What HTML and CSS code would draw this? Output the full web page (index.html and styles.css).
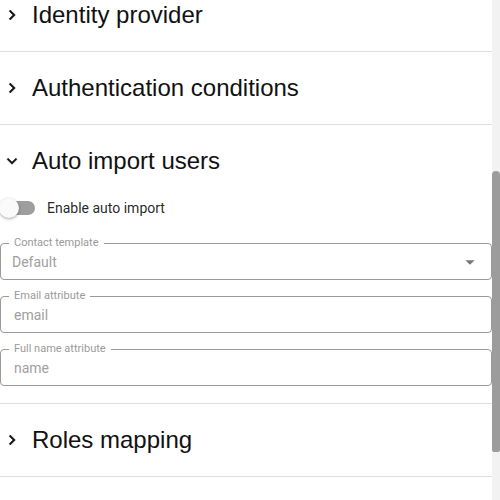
FILE: index.html
```html
<!DOCTYPE html>
<html>
<head>
<meta charset="utf-8">
<link rel="stylesheet" href="styles.css">
</head>
<body>
<div class="viewport">
  <div class="content">
    <div class="section">
      <div class="header">
        <svg class="chev" viewBox="0 0 24 24"><path d="M8.59 16.59 13.17 12 8.59 7.41 10 6l6 6-6 6z"/></svg>
        <span class="title">Identity provider</span>
      </div>
    </div>
    <div class="section">
      <div class="header">
        <svg class="chev" viewBox="0 0 24 24"><path d="M8.59 16.59 13.17 12 8.59 7.41 10 6l6 6-6 6z"/></svg>
        <span class="title">Authentication conditions</span>
      </div>
    </div>
    <div class="section">
      <div class="header">
        <svg class="chev" viewBox="0 0 24 24"><path d="M7.41 8.59 12 13.17l4.59-4.58L18 10l-6 6-6-6z"/></svg>
        <span class="title">Auto import users</span>
      </div>
      <div class="body">
        <div class="switch-row">
          <span class="switch"><span class="track"></span><span class="thumb"></span></span>
          <span class="switch-label">Enable auto import</span>
        </div>
        <div class="field">
          <span class="label">Contact template</span>
          <div class="value select">Default<svg class="caret" viewBox="0 0 24 24"><path d="M7 10l5 5 5-5z"/></svg></div>
        </div>
        <div class="field">
          <span class="label">Email attribute</span>
          <div class="value input">email</div>
        </div>
        <div class="field">
          <span class="label">Full name attribute</span>
          <div class="value input">name</div>
        </div>
      </div>
    </div>
    <div class="section">
      <div class="header">
        <svg class="chev" viewBox="0 0 24 24"><path d="M8.59 16.59 13.17 12 8.59 7.41 10 6l6 6-6 6z"/></svg>
        <span class="title">Roles mapping</span>
      </div>
    </div>
    <div class="section">
      <div class="header"></div>
    </div>
  </div>
  <div class="scrollbar"><div class="sb-thumb"></div></div>
</div>
</body>
</html>
```

FILE: styles.css
```css
html, body {
  margin: 0;
  padding: 0;
  background: #fff;
}
body {
  font-family: Roboto, "Liberation Sans", sans-serif;
  color: rgba(0,0,0,0.87);
  overflow: hidden;
}
.viewport {
  display: flex;
  height: 500px;
  width: 500px;
  overflow: hidden;
}
.content {
  flex: 1;
  margin-top: -21px;
}
.section {
  border-bottom: 1px solid #e0e0e0;
}
.header {
  height: 72px;
  display: flex;
  align-items: center;
}
.chev {
  width: 20px;
  height: 20px;
  margin-left: 2px;
  margin-right: 10px;
  fill: #111;
  stroke: #111;
  stroke-width: 0.6;
}
.title {
  font-family: "Liberation Sans", Arial, sans-serif;
  font-size: 24px;
  color: #111;
}
.body {
  padding: 0 0 17px 0;
}
.switch-row {
  display: flex;
  align-items: center;
  height: 22px;
}
.switch {
  position: relative;
  width: 36px;
  height: 22px;
  margin-right: 11px;
}
.track {
  position: absolute;
  left: 1px;
  top: 4px;
  width: 34px;
  height: 14px;
  border-radius: 7px;
  background: #9e9e9e;
}
.thumb {
  position: absolute;
  left: -1px;
  top: 1px;
  width: 20px;
  height: 20px;
  border-radius: 50%;
  background: #fafafa;
  box-shadow: 0 1px 3px rgba(0,0,0,0.35);
}
.switch-label {
  font-size: 14px;
}
.field {
  position: relative;
  border: 1px solid #9a9a9a;
  border-radius: 4px;
  height: 37px;
  box-sizing: border-box;
  display: flex;
  align-items: center;
}
.field + .field {
  margin-top: 16px;
}
.switch-row + .field {
  margin-top: 24px;
}
.label {
  position: absolute;
  left: 8px;
  top: -8px;
  font-size: 11px;
  line-height: 14px;
  color: #9a9a9a;
  background: #fff;
  padding: 0 5px;
}
.value {
  flex: 1;
  font-size: 14px;
  color: #a0a0a0;
  display: flex;
  align-items: center;
}
.select {
  padding-left: 11px;
  justify-content: space-between;
  padding-right: 10px;
}
.input {
  padding-left: 13px;
}
.caret {
  width: 22px;
  height: 22px;
  fill: #777;
}
.scrollbar {
  width: 8px;
  background: #f2f2f2;
  flex-shrink: 0;
}
.sb-thumb {
  margin-top: 171px;
  height: 281px;
  background: #9c9c9c;
  border-radius: 4px 4px 2px 2px;
}
```
